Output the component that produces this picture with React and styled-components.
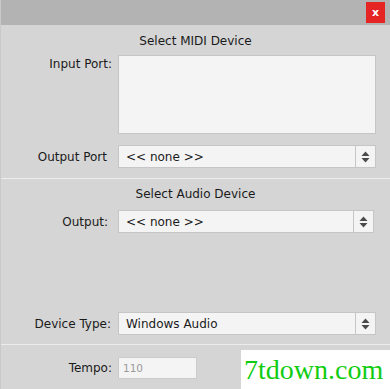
import React from "react";
import styled, { createGlobalStyle } from "styled-components";

const Global = createGlobalStyle`
  html, body { margin: 0; padding: 0; background: #d5d5d5; }
  body { font-family: "DejaVu Sans", Tahoma, sans-serif; font-size: 12px; color: #1a1a1a; }
`;

const Window = styled.div`
  width: 390px;
  height: 389px;
  background: #d5d5d5;
  display: flex;
  flex-direction: column;
  position: relative;
  overflow: hidden;
  border-left: 1px solid #c9c9c9;
  box-sizing: border-box;
`;

const TitleBar = styled.div`
  height: 25px;
  background: #b3b3b3;
  display: flex;
  justify-content: flex-end;
  align-items: flex-start;
  padding: 2px 5px 0 0;
  box-sizing: border-box;
  flex: none;
`;

const CloseButton = styled.div`
  width: 19px;
  height: 21px;
  background: #e52424;
  color: #fff;
  font-size: 11px;
  font-weight: bold;
  display: flex;
  align-items: center;
  justify-content: center;
  line-height: 1;
`;

const Section = styled.div`
  display: flex;
  flex-direction: column;
  padding: ${(p) => p.$pad || "0"};
  flex: ${(p) => (p.$grow ? "1" : "none")};
  height: ${(p) => (p.$h ? `${p.$h}px` : "auto")};
  box-sizing: border-box;
  border-bottom: ${(p) => (p.$sep ? "1px solid #ececec" : "none")};
`;

const Heading = styled.div`
  text-align: center;
  height: 16px;
  line-height: 16px;
  font-size: 12px;
  margin-bottom: ${(p) => p.$mb}px;
`;

const Row = styled.div`
  display: grid;
  grid-template-columns: 111px 1fr;
  column-gap: 6px;
  align-items: ${(p) => (p.$top ? "start" : "center")};
  padding-right: ${(p) => p.$right || 14}px;
  margin-top: ${(p) => p.$mt || 0}px;
`;

const Label = styled.div`
  text-align: right;
  font-size: 12px;
  padding-right: ${(p) => p.$pr || 0}px;
  padding-top: ${(p) => p.$pt || 0}px;
  white-space: nowrap;
`;

const ListBox = styled.div`
  height: 79px;
  background: #f4f4f4;
  border: 1px solid #c6c6c6;
  box-sizing: border-box;
`;

const Select = styled.div`
  height: 23px;
  background: #f4f4f4;
  border: 1px solid #c6c6c6;
  box-sizing: border-box;
  display: flex;
  align-items: stretch;
`;

const SelectText = styled.div`
  flex: 1;
  padding-left: 7px;
  display: flex;
  align-items: center;
  font-size: 12px;
`;

const Stepper = styled.div`
  width: 19px;
  border-left: 1px solid #c6c6c6;
  display: flex;
  align-items: center;
  justify-content: center;
`;

const TempoInput = styled.div`
  width: 79px;
  height: 22px;
  background: #f4f4f4;
  border: 1px solid #cbcbcb;
  box-sizing: border-box;
  color: #9a9a9a;
  font-size: 10.5px;
  display: flex;
  align-items: center;
  padding-left: 4px;
`;

const Spacer = styled.div`
  flex: 1;
`;

const Watermark = styled.div`
  position: absolute;
  left: 240px;
  top: 350px;
  width: 150px;
  height: 39px;
  background: #fff;
  color: #11cc11;
  font-family: "Liberation Serif", serif;
  font-size: 28px;
  line-height: 39px;
  padding-left: 3px;
  box-sizing: border-box;
  white-space: nowrap;
`;

const Arrows = () => (
  <svg width="9" height="12" viewBox="0 0 9 12">
    <path d="M4.5 0.5 L8.5 5 L0.5 5 Z" fill="#4a4a4a" />
    <path d="M0.5 7 L8.5 7 L4.5 11.5 Z" fill="#4a4a4a" />
  </svg>
);

const Dropdown = ({ value }) => (
  <Select>
    <SelectText>{value}</SelectText>
    <Stepper>
      <Arrows />
    </Stepper>
  </Select>
);

export default function App() {
  return (
    <>
      <Global />
      <Window>
        <TitleBar>
          <CloseButton>x</CloseButton>
        </TitleBar>
        <Section $pad="8px 0 10px 0" $sep>
          <Heading $mb={6}>Select MIDI Device</Heading>
          <Row $top>
            <Label $pt={2}>Input Port:</Label>
            <ListBox />
          </Row>
          <Row $mt={11}>
            <Label $pr={5}>Output Port</Label>
            <Dropdown value="<< none >>" />
          </Row>
        </Section>
        <Section $pad="7px 0 9px 0" $grow $sep>
          <Heading $mb={8}>Select Audio Device</Heading>
          <Row $right={16}>
            <Label $pr={4}>Output:</Label>
            <Dropdown value="<< none >>" />
          </Row>
          <Spacer />
          <Row>
            <Label $pr={1}>Device Type:</Label>
            <Dropdown value="Windows Audio" />
          </Row>
        </Section>
        <Section $pad="12px 0 0 0" $h={44}>
          <Row>
            <Label>Tempo:</Label>
            <TempoInput>110</TempoInput>
          </Row>
        </Section>
        <Watermark>7tdown.com</Watermark>
      </Window>
    </>
  );
}
